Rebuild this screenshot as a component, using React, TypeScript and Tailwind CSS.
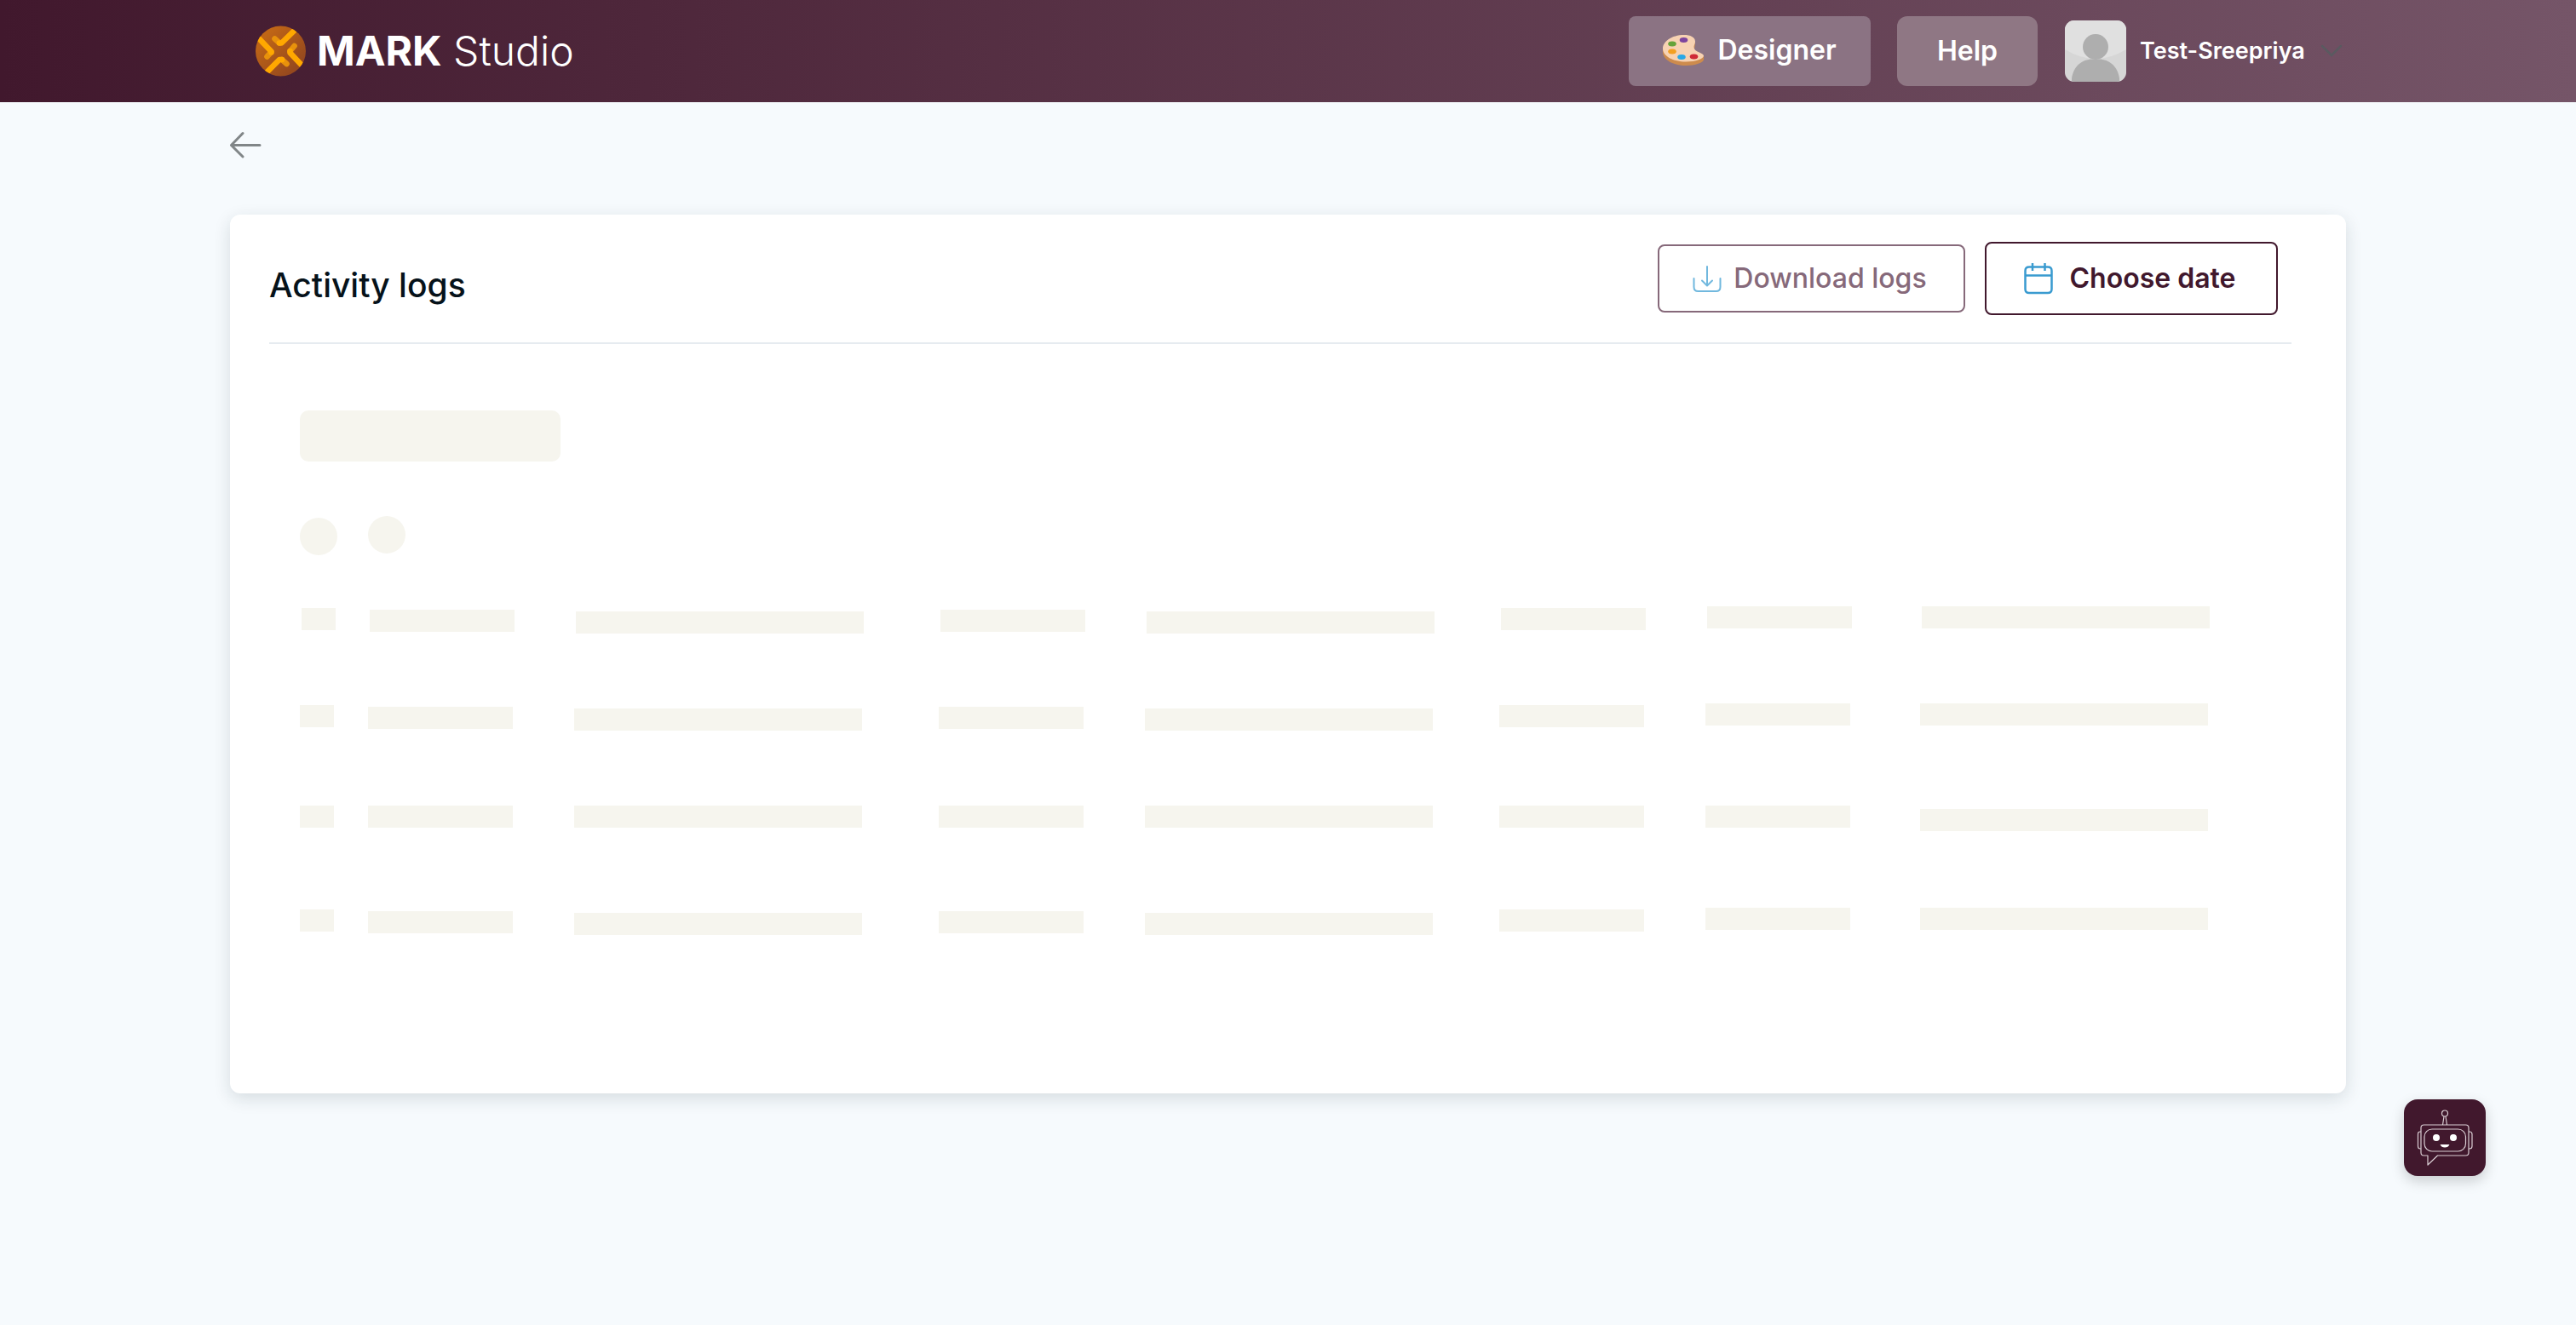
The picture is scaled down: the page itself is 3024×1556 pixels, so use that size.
import React from "react";

type Bar = { width: string; offset: string };

const staggered: Bar[] = [
  { width: "w-10", offset: "mt-0.5" },
  { width: "w-[170px]", offset: "mt-1" },
  { width: "w-[338px]", offset: "mt-1.5" },
  { width: "w-[170px]", offset: "mt-1" },
  { width: "w-[338px]", offset: "mt-1.5" },
  { width: "w-[170px]", offset: "mt-0.5" },
  { width: "w-[170px]", offset: "mt-0" },
  { width: "w-[338px]", offset: "mt-0" },
];

const level: Bar[] = staggered.map((bar, i) => ({
  width: bar.width,
  offset: i === staggered.length - 1 ? "mt-1" : "mt-0",
}));

const rows: { bars: Bar[]; className: string }[] = [
  { bars: staggered, className: "mt-[60px] -mr-0.5 ml-0.5 h-[114px]" },
  { bars: staggered, className: "h-[120px]" },
  { bars: level, className: "h-[120px]" },
  { bars: staggered, className: "h-8" },
];

function SkeletonRow({ bars, className }: { bars: Bar[]; className: string }) {
  return (
    <div
      className={`grid grid-cols-[80fr_242fr_428fr_242fr_416fr_242fr_252fr_338fr] items-start ${className}`}
    >
      {bars.map((bar, i) => (
        <div key={i} className={`h-[26px] max-w-full bg-[#f6f5ee] ${bar.width} ${bar.offset}`} />
      ))}
    </div>
  );
}

function LogoMark() {
  return (
    <svg viewBox="0 0 60 60" className="size-[60px] shrink-0" aria-hidden="true">
      <defs>
        <linearGradient id="disc" x1="0" y1="0" x2="1" y2="1">
          <stop offset="0.2" stopColor="#bf6516" />
          <stop offset="0.8" stopColor="#96491e" />
        </linearGradient>
        <clipPath id="round">
          <circle cx="29.5" cy="30" r="29.5" />
        </clipPath>
      </defs>
      <g clipPath="url(#round)">
        <rect width="60" height="60" fill="url(#disc)" />
        <g fill="none" strokeWidth="6.6" strokeLinecap="round" strokeLinejoin="round">
          <g stroke="#e8920c">
            <path d="M22.5 15.500 28 20.500" />
            <path d="M45.500 24 40.500 30" />
            <path d="M36.500 45 31 40" />
            <path d="M13.500 36.500 18.500 31" />
          </g>
          <g stroke="#ffa800">
            <path d="M50 1.500 30.500 20.500H28" />
            <path d="M56 48.500 40.500 32V30" />
            <path d="M9 59 28 40H31" />
            <path d="M-1 10 18.500 30.500V31.500" />
          </g>
        </g>
      </g>
    </svg>
  );
}

function PaletteIcon() {
  return (
    <svg viewBox="0 0 48 36" className="h-9 w-12" aria-hidden="true">
      <path
        d="M0 16V20C0 29 12 36 27 36C38 36 48 32.500 48 29V24.500L36 19.500Q38 14 38 8Z"
        fill="#cd8b4d"
      />
      <path
        d="M25 0C10 0 0 8 0 16C0 25 12 31.500 27 31.500C39 31.500 48 28 48 24.500C48 21 36.500 20 36.500 14.500C36.500 11.500 38 11 38 7.500C38 2.500 32 0 25 0Z"
        fill="#f7d2b2"
      />
      <ellipse cx="24.500" cy="6" rx="4.800" ry="3" fill="#7d459e" />
      <ellipse cx="11" cy="10.500" rx="4.800" ry="3" fill="#66a33a" />
      <ellipse cx="11" cy="19.500" rx="4.800" ry="3" fill="#f3a021" />
      <ellipse cx="22" cy="26" rx="4.800" ry="3" fill="#2aa8e6" />
      <ellipse cx="36.500" cy="25.500" rx="4.800" ry="3" fill="#cf2a37" />
    </svg>
  );
}

function Avatar() {
  return (
    <svg viewBox="0 0 72 72" className="size-[72px] rounded-[11px]" aria-hidden="true">
      <rect width="72" height="72" fill="#d6d6d6" />
      <path d="M0 0H72V34Q54 45 36 45T0 34Z" fill="#e0e0e0" />
      <circle cx="36" cy="31" r="15" fill="#aeaeae" />
      <path d="M8 72V68C10 54 20 45.500 32 45.500H40C52 45.500 62 54 64 68V72Z" fill="#aeaeae" />
    </svg>
  );
}

function RobotIcon() {
  return (
    <svg
      viewBox="0 0 66 66"
      className="size-[66px]"
      fill="none"
      stroke="#d9cdd3"
      strokeWidth="1.200"
      strokeLinejoin="round"
      aria-hidden="true"
    >
      <circle cx="33" cy="4.500" r="3.500" />
      <path d="M32 8 30.500 18M34 8 35.500 18" />
      <path d="M8.500 18H57.500Q61 18 61 21.500V50.500Q61 54 57.500 54H24.500L13 65V54H8.500Q5 54 5 50.500V21.500Q5 18 8.500 18Z" />
      <rect x="9" y="23" width="48.500" height="26" rx="9" />
      <path d="M5 26H4Q1.500 26 1.500 29V43Q1.500 46 4 46H5M61 26H62Q65 26 65 29V43Q65 46 62 46H61" />
      <circle cx="23" cy="33" r="4" fill="#fff" stroke="none" />
      <circle cx="43" cy="33" r="4" fill="#fff" stroke="none" />
      <path d="M27.500 41H38.500Q37 44.500 33 44.500T27.500 41Z" fill="#fff" stroke="none" />
    </svg>
  );
}

export default function App() {
  return (
    <div className="relative min-h-screen bg-[#f6fafd] font-['Inter',sans-serif]">
      <header className="h-[120px] bg-linear-to-r from-[#41182d] to-[#755568]">
        <div className="mx-auto flex h-full w-full max-w-[2484px] items-center justify-between pr-1 pl-[30px] text-white">
          <a href="#home" className="flex items-center gap-3 text-5xl">
            <LogoMark />
            <span className="whitespace-nowrap">
              <span className="font-bold">MARK</span> <span className="font-light">Studio</span>
            </span>
          </a>
          <div className="flex items-center">
            <button className="flex h-[82px] w-[284px] items-center justify-center gap-4 rounded-lg bg-[#8b7383] pb-0.5 text-[32px] font-semibold">
              <PaletteIcon />
              Designer
            </button>
            <button className="ml-[31px] h-[82px] w-[165px] rounded-xl bg-[#8f7784] text-[32px] font-semibold">
              Help
            </button>
            <button className="ml-8 flex items-center text-[27px] font-semibold">
              <Avatar />
              <span className="ml-4 w-[196px] text-left whitespace-nowrap">Test-Sreepriya</span>
              <svg viewBox="0 0 26 16" className="ml-4 h-4 w-[26px]" aria-hidden="true">
                <path d="M2 2 13 13 24 2" fill="none" stroke="#5a5a60" strokeWidth="2.500" strokeLinecap="round" />
              </svg>
            </button>
          </div>
        </div>
      </header>

      <main className="mx-auto w-full max-w-[2484px]">
        <div className="flex h-[132px] items-start pt-[34px]">
          <button aria-label="Back">
            <svg viewBox="0 0 38 32" className="h-8 w-[38px]" aria-hidden="true">
              <path
                d="M35 16.500H1.500M15 2.500 1.500 16.500 15 30"
                fill="none"
                stroke="#818688"
                strokeWidth="3"
                strokeLinecap="round"
                strokeLinejoin="round"
              />
            </svg>
          </button>
        </div>

        <section className="rounded-xl bg-white pb-[186px] shadow-[0_6px_20px_rgba(20,40,50,0.14)]">
          <div className="mr-16 ml-[46px] flex h-[152px] items-center justify-between border-b-2 border-[#e6ebf0] pr-4">
            <h1 className="pt-4 text-[39px] font-medium text-[#06121a]">Activity logs</h1>
            <div className="flex items-center gap-[23px]">
              <button className="flex h-20 w-[361px] items-center justify-center gap-3.5 rounded-lg border-2 border-[#86697a] pr-1 text-[32px] font-medium text-[#86697a]">
                <svg viewBox="0 0 34 34" className="size-[34px]" aria-hidden="true">
                  <path
                    d="M17 3V25M11 19.500 17 25.500 23 19.500M1.500 17V27Q1.500 32 6.500 32H27.500Q32.500 32 32.500 27V17"
                    fill="none"
                    stroke="#71b8de"
                    strokeWidth="2"
                    strokeLinecap="round"
                    strokeLinejoin="round"
                  />
                </svg>
                Download logs
              </button>
              <button className="flex h-[86px] w-[344px] items-center justify-center gap-5 rounded-lg border-2 border-[#41182d] pr-1 text-[32px] font-semibold text-[#41182d]">
                <svg viewBox="0 0 34 38" className="h-[38px] w-[34px]" aria-hidden="true">
                  <path
                    d="M6 5.500H28Q32.500 5.500 32.500 10V31.500Q32.500 36 28 36H6Q1.500 36 1.500 31.500V10Q1.500 5.500 6 5.500ZM1.500 15.500H32.500M10 1V10M24.500 1V10"
                    fill="none"
                    stroke="#3a9bd0"
                    strokeWidth="2.500"
                    strokeLinejoin="round"
                  />
                </svg>
                Choose date
              </button>
            </div>
          </div>

          <div className="mr-[162px] ml-[82px] pt-[78px]" aria-busy="true" aria-label="Loading activity logs">
            <div className="h-[60px] w-[306px] rounded-[10px] bg-[#f6f5ee]" />
            <div className="mt-16 flex h-[46px] gap-9">
              <div className="size-11 self-end rounded-full bg-[#f6f5ee]" />
              <div className="size-11 rounded-full bg-[#f6f5ee]" />
            </div>
            {rows.map((row, i) => (
              <SkeletonRow key={i} bars={row.bars} className={row.className} />
            ))}
          </div>
        </section>
      </main>

      <button
        aria-label="Open chat assistant"
        className="fixed right-[106px] bottom-[175px] flex h-[90px] w-24 items-center justify-center rounded-2xl bg-[#41182d] shadow-[0_6px_16px_rgba(0,0,0,0.18)]"
      >
        <RobotIcon />
      </button>
    </div>
  );
}
